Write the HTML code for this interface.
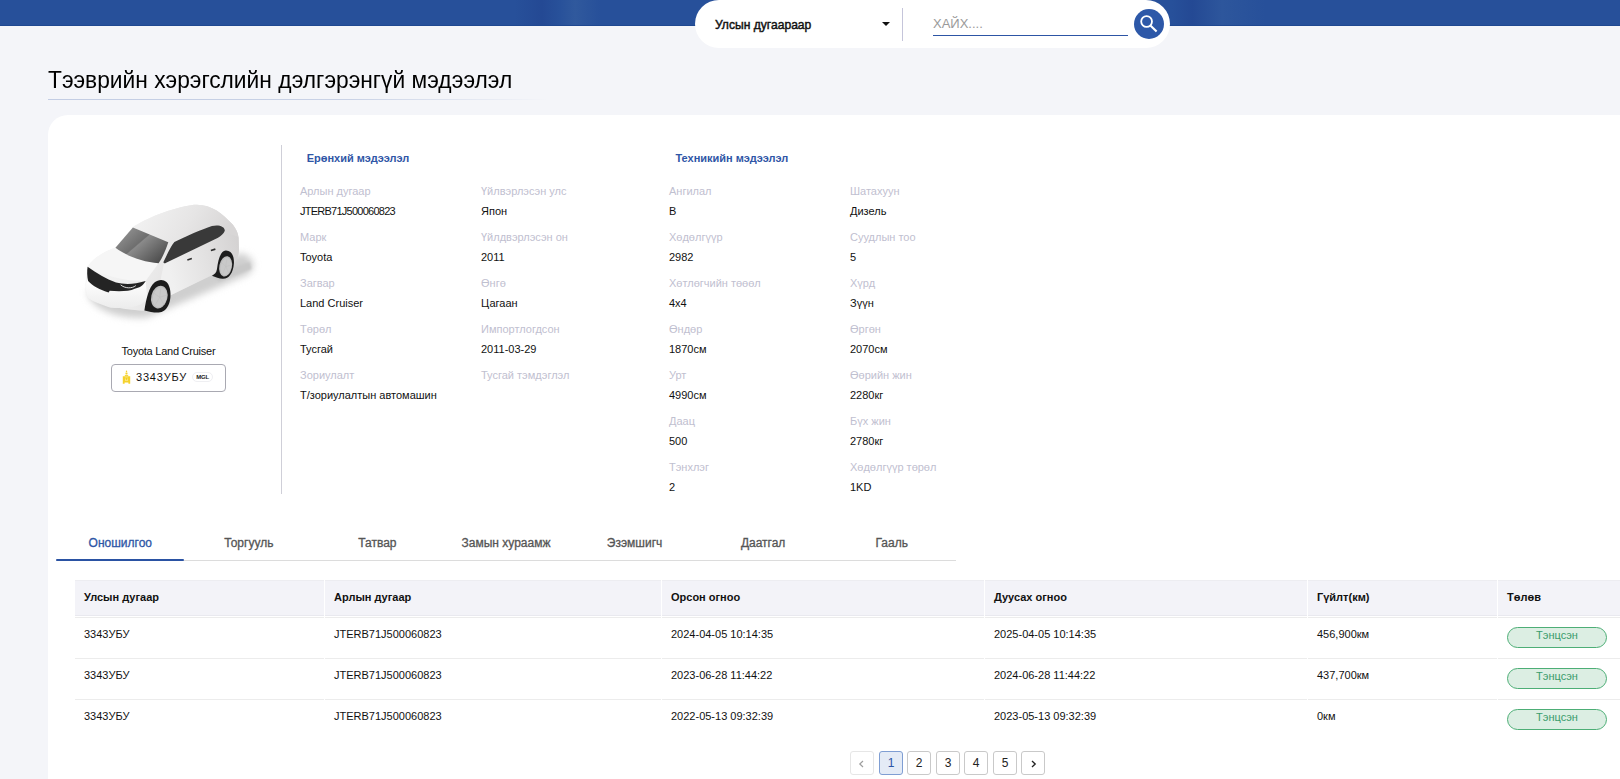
<!DOCTYPE html>
<html><head><meta charset="utf-8">
<style>
*{box-sizing:border-box;margin:0;padding:0}
html,body{width:1620px;height:779px;overflow:hidden;background:#F4F5F9;font-family:"Liberation Sans",sans-serif;color:#111}
.abs{position:absolute;white-space:nowrap}
#hdr{position:absolute;left:0;top:0;width:1620px;height:26px;background:linear-gradient(90deg,#27509A 0px,#27509A 515px,#244994 542px,#28519A 560px,#30599D 575px,#27509A 600px,#27509A 1172px,#244994 1192px,#2D569C 1222px,#27509A 1265px,#27509A 1620px);border-bottom:1px solid #1F4891}
#pill{position:absolute;left:695px;top:0;width:475px;height:48px;background:#fff;border-radius:24px}
#title{position:absolute;left:48px;top:66px;font-size:24px;line-height:28px;color:#000;transform:scaleX(0.948);transform-origin:0 0}
#tline{position:absolute;left:48px;top:99px;width:500px;height:1px;background:linear-gradient(90deg,#C3CDE4 0%,#C9D2E6 60%,rgba(244,245,249,0) 100%)}
#card{position:absolute;left:48px;top:115px;width:1600px;height:700px;background:#fff;border-radius:20px 0 0 0}
.sec{font-size:11px;line-height:13px;font-weight:700;color:#2F56A6}
.lbl{font-size:11px;line-height:13px;color:#BFC0D0}
.val{font-size:11px;line-height:13px;color:#111}
.tab{position:absolute;top:535.8px;line-height:14px;width:128.57px;text-align:center;font-size:12px;color:#555;-webkit-text-stroke:0.3px currentColor}
.th{position:absolute;top:580px;height:36px;background:#F3F3F8;border-bottom:1px solid #E9E9EF;border-top:1px solid #EDEDF1}
.th span{position:absolute;left:9px;top:10px;line-height:13px;font-size:11px;font-weight:700;color:#111}
.td{position:absolute;font-size:11px;color:#111}
.rl{position:absolute;height:1px;background:#ECECEC}
.pg{position:absolute;top:751px;width:24px;height:24px;border:1px solid #C9C9C9;border-radius:3px;background:#fff;font-size:12px;text-align:center;line-height:22px;color:#222}
.badge{position:absolute;left:1507px;width:100px;height:20.5px;border:1px solid #4DAE76;background:#DCEEE3;border-radius:10.5px;color:#3A9C6C;font-size:11px;text-align:center;line-height:15px}
</style></head>
<body>
<div id="hdr"></div>
<div id="pill"></div>
<div class="abs" style="left:715px;top:18.4px;font-size:12.1px;line-height:14px;font-weight:400;color:#111;-webkit-text-stroke:0.45px #111">Улсын дугаараар</div>
<svg class="abs" style="left:881px;top:21px" width="10" height="6" viewBox="0 0 10 6"><path d="M1 1 L9 1 L5 5 Z" fill="#111"/></svg>
<div class="abs" style="left:902px;top:8px;width:1px;height:33px;background:#C5C5DA"></div>
<div class="abs" style="left:933px;top:16px;font-size:13px;color:#9A9A9A">ХАЙХ....</div>
<div class="abs" style="left:933px;top:35px;width:195px;height:1px;background:#2D55A5"></div>
<div class="abs" style="left:1134px;top:9px;width:30px;height:30px;border-radius:15px;background:#2D58A8"></div>
<svg class="abs" style="left:1134px;top:9px" width="30" height="30" viewBox="0 0 30 30"><circle cx="12.6" cy="12.5" r="5.4" fill="none" stroke="#fff" stroke-width="1.8"/><path d="M16.4 16.4 L22.6 22.6" stroke="#fff" stroke-width="2.1" stroke-linecap="butt"/></svg>

<div id="title" class="abs">Тээврийн хэрэгслийн дэлгэрэнгүй мэдээлэл</div>
<div id="tline"></div>

<div id="card"></div>
<svg class="abs" style="left:70px;top:190px" width="200" height="140" viewBox="0 0 1113 779">
<defs>
<linearGradient id="cb" x1="0" y1="0" x2="1" y2="0.3"><stop offset="0" stop-color="#FAFAFA"/><stop offset="0.45" stop-color="#EFEFEF"/><stop offset="1" stop-color="#D9D7D7"/></linearGradient>
<linearGradient id="cr" x1="0" y1="0" x2="1" y2="0.2"><stop offset="0" stop-color="#F4F4F4"/><stop offset="0.6" stop-color="#E6E5E5"/><stop offset="1" stop-color="#D8D6D6"/></linearGradient>
<linearGradient id="cs" x1="0" y1="0" x2="1" y2="-0.2"><stop offset="0" stop-color="#F0F0F0"/><stop offset="0.5" stop-color="#E2E1E1"/><stop offset="1" stop-color="#D2D0D0"/></linearGradient>
<linearGradient id="cw" x1="0" y1="0" x2="1" y2="0.8"><stop offset="0" stop-color="#9E9E9E"/><stop offset="0.48" stop-color="#6E6E6E"/><stop offset="0.5" stop-color="#8A8A8A"/><stop offset="1" stop-color="#4A4A4A"/></linearGradient>
<linearGradient id="cf" x1="0" y1="0" x2="0" y2="1"><stop offset="0" stop-color="#FFFFFF"/><stop offset="1" stop-color="#ECECEC"/></linearGradient>
<filter id="cbl" x="-30%" y="-30%" width="160%" height="160%"><feGaussianBlur stdDeviation="20"/></filter>
<filter id="cbl2" x="-30%" y="-30%" width="160%" height="160%"><feGaussianBlur stdDeviation="6"/></filter>
</defs>
<path d="M95 560 C 110 660 260 720 430 710 L 990 470 C 1040 430 1030 370 950 350 L 520 560 Z" fill="#CFCFCF" filter="url(#cbl)"/>
<path d="M780 470 L 1000 400 L 1010 440 L 830 510 Z" fill="#C8C8C8" filter="url(#cbl2)"/>
<path d="M350 207 C 420 160 560 100 690 82 C 780 75 850 130 900 187 C 925 215 935 240 938 270 L 940 330 C 940 370 925 400 900 420 L 560 585 C 530 640 470 680 415 672 C 330 668 180 650 101 598 C 88 580 84 560 84 535 L 98 427 C 120 390 170 350 253 322 Z" fill="url(#cb)"/>
<path d="M350 207 C 420 160 560 100 690 82 C 780 75 850 130 900 187 C 925 215 935 240 938 262 L 860 232 C 850 200 820 195 800 200 L 547 291 Z" fill="url(#cr)"/>
<path d="M523 407 L 860 232 L 938 262 L 940 330 C 940 370 925 400 900 420 L 560 585 C 540 600 520 560 500 520 Z" fill="url(#cs)"/>
<path d="M98 427 C 120 390 170 350 253 322 C 300 350 400 395 493 408 C 470 440 440 480 421 507 C 300 510 170 470 98 427 Z" fill="#F6F6F6"/>
<path d="M84 535 L 98 500 C 200 545 320 568 421 509 L 430 600 C 400 660 300 660 227 655 C 180 640 120 620 101 598 Z" fill="url(#cf)"/>
<path d="M350 208 L 547 291 C 535 330 515 375 493 408 C 400 400 310 365 253 322 Z" fill="url(#cw)"/>
<path d="M581 290 C 650 255 730 220 790 200 C 830 190 865 205 861 228 C 855 245 840 255 821 267 L 535 405 C 522 412 518 405 522 396 C 540 360 560 315 581 290 Z" fill="#393939"/>
<path d="M98 427 C 150 465 200 495 256 515 C 300 525 350 528 421 507 C 405 535 385 545 360 550 C 330 565 270 566 221 561 L 215 570 C 170 560 120 530 101 507 C 95 480 94 450 98 427 Z" fill="#242424"/>
<path d="M282 528 C 305 548 345 550 366 532" stroke="#F0F0F0" stroke-width="5" fill="none"/>
<path d="M414 670 C 425 600 440 540 470 515 C 500 490 545 495 556 550 C 570 620 540 685 490 682 C 460 682 440 676 414 670 Z" fill="#1C1C1C"/>
<ellipse cx="497" cy="596" rx="45" ry="64" transform="rotate(14 497 596)" fill="#BDBDBD"/>
<ellipse cx="499" cy="597" rx="38" ry="56" transform="rotate(14 499 597)" fill="#C9C9C9"/>
<path d="M499 597 L 505 548 M499 597 L 540 585 M499 597 L 525 640 M499 597 L 475 638 M499 597 L 462 570" stroke="#C0C0C0" stroke-width="4"/>
<path d="M790 477 C 805 470 815 460 818 440 C 825 380 840 340 866 337 C 900 335 915 370 912 410 C 908 460 885 495 850 494 C 830 492 810 485 790 477 Z" fill="#1C1C1C"/>
<ellipse cx="866" cy="425" rx="35" ry="57" transform="rotate(12 866 425)" fill="#BDBDBD"/>
<ellipse cx="867" cy="426" rx="29" ry="49" transform="rotate(12 867 426)" fill="#C9C9C9"/>
<path d="M867 426 L 873 384 M867 426 L 898 418 M867 426 L 885 465 M867 426 L 850 465 M867 426 L 840 400" stroke="#C0C0C0" stroke-width="3"/>
<path d="M653 389 L 678 381 M 784 337 L 809 329" stroke="#2E2E2E" stroke-width="9"/>
</svg>


<div class="abs" style="left:281px;top:145px;width:1px;height:349px;background:#CFCFD8"></div>
<div class="abs sec" style="left:306.7px;top:152px">Ерөнхий мэдээлэл</div>
<div class="abs sec" style="left:675.4px;top:152px">Техникийн мэдээлэл</div>
<div class="abs lbl" style="left:300px;top:184.8px">Арлын дугаар</div>
<div class="abs val" style="left:300px;top:204.9px;letter-spacing:-0.75px">JTERB71J500060823</div>
<div class="abs lbl" style="left:300px;top:230.8px">Марк</div>
<div class="abs val" style="left:300px;top:250.9px">Toyota</div>
<div class="abs lbl" style="left:300px;top:276.8px">Загвар</div>
<div class="abs val" style="left:300px;top:296.9px">Land Cruiser</div>
<div class="abs lbl" style="left:300px;top:322.8px">Төрөл</div>
<div class="abs val" style="left:300px;top:342.9px">Тусгай</div>
<div class="abs lbl" style="left:300px;top:368.8px">Зориулалт</div>
<div class="abs val" style="left:300px;top:388.9px">Т/зориулалтын автомашин</div>
<div class="abs lbl" style="left:481px;top:184.8px">Үйлвэрлэсэн улс</div>
<div class="abs val" style="left:481px;top:204.9px">Япон</div>
<div class="abs lbl" style="left:481px;top:230.8px">Үйлдвэрлэсэн он</div>
<div class="abs val" style="left:481px;top:250.9px">2011</div>
<div class="abs lbl" style="left:481px;top:276.8px">Өнгө</div>
<div class="abs val" style="left:481px;top:296.9px">Цагаан</div>
<div class="abs lbl" style="left:481px;top:322.8px">Импортлогдсон</div>
<div class="abs val" style="left:481px;top:342.9px">2011-03-29</div>
<div class="abs lbl" style="left:481px;top:368.8px">Тусгай тэмдэглэл</div>
<div class="abs lbl" style="left:669px;top:184.8px">Ангилал</div>
<div class="abs val" style="left:669px;top:204.9px">B</div>
<div class="abs lbl" style="left:669px;top:230.8px">Хөдөлгүүр</div>
<div class="abs val" style="left:669px;top:250.9px">2982</div>
<div class="abs lbl" style="left:669px;top:276.8px">Хөтлөгчийн төөөл</div>
<div class="abs val" style="left:669px;top:296.9px">4x4</div>
<div class="abs lbl" style="left:669px;top:322.8px">Өндөр</div>
<div class="abs val" style="left:669px;top:342.9px">1870см</div>
<div class="abs lbl" style="left:669px;top:368.8px">Урт</div>
<div class="abs val" style="left:669px;top:388.9px">4990см</div>
<div class="abs lbl" style="left:669px;top:414.8px">Даац</div>
<div class="abs val" style="left:669px;top:434.9px">500</div>
<div class="abs lbl" style="left:669px;top:460.8px">Тэнхлэг</div>
<div class="abs val" style="left:669px;top:480.9px">2</div>
<div class="abs lbl" style="left:850px;top:184.8px">Шатахуун</div>
<div class="abs val" style="left:850px;top:204.9px">Дизель</div>
<div class="abs lbl" style="left:850px;top:230.8px">Суудлын тоо</div>
<div class="abs val" style="left:850px;top:250.9px">5</div>
<div class="abs lbl" style="left:850px;top:276.8px">Хүрд</div>
<div class="abs val" style="left:850px;top:296.9px">Зүүн</div>
<div class="abs lbl" style="left:850px;top:322.8px">Өргөн</div>
<div class="abs val" style="left:850px;top:342.9px">2070см</div>
<div class="abs lbl" style="left:850px;top:368.8px">Өөрийн жин</div>
<div class="abs val" style="left:850px;top:388.9px">2280кг</div>
<div class="abs lbl" style="left:850px;top:414.8px">Бүх жин</div>
<div class="abs val" style="left:850px;top:434.9px">2780кг</div>
<div class="abs lbl" style="left:850px;top:460.8px">Хөдөлгүүр төрөл</div>
<div class="abs val" style="left:850px;top:480.9px">1KD</div>
<div class="abs val" style="left:121.5px;top:345px;letter-spacing:-0.24px">Toyota Land Cruiser</div>
<div class="abs" style="left:111px;top:364px;width:115px;height:28px;border:1px solid #A9A9B2;border-radius:4px;background:#fff"></div>
<div class="abs" style="left:136px;top:370.5px;font-size:11px;font-weight:400;letter-spacing:0.8px;color:#111;line-height:13px">3343УБУ</div>
<div class="abs" style="left:192px;top:371.5px;width:21px;height:10px;border-radius:6px;background:#fff;border:1px solid #EFEFF2;font-size:6px;font-weight:700;line-height:8px;text-align:center;color:#222;letter-spacing:-0.2px">MGL</div>
<svg class="abs" style="left:122px;top:370px" width="9" height="14" viewBox="0 0 9 14"><path d="M4.5 0 L5.4 2.2 L3.6 2.2 Z" fill="#F5D22C"/><circle cx="4.5" cy="3.5" r="1.1" fill="#F5D22C"/><rect x="2.8" y="4.9" width="3.4" height="1" fill="#F5D22C"/><path d="M0.8 6.2 H8.2 V13.7 H6.4 V12.6 H2.6 V13.7 H0.8 Z" fill="#F5D22C"/><path d="M3 7.5 H6 V11 H3 Z" fill="#FBE37A"/><path d="M3.3 8.2 L5.7 8.2 L4.5 10 Z" fill="#F0C800"/></svg>
<div class="tab" style="left:56.00px;color:#2D55A5">Оношилгоо</div>
<div class="tab" style="left:184.57px;">Торгууль</div>
<div class="tab" style="left:313.14px;">Татвар</div>
<div class="tab" style="left:441.71px;">Замын хураамж</div>
<div class="tab" style="left:570.28px;">Эзэмшигч</div>
<div class="tab" style="left:698.85px;">Даатгал</div>
<div class="tab" style="left:827.42px;">Гааль</div>
<div class="abs" style="left:56px;top:560px;width:900px;height:1px;background:#DCDCDC"></div>
<div class="abs" style="left:56px;top:559px;width:128px;height:1.5px;background:#2A52A3;border-radius:1px"></div>
<div class="th" style="left:75px;width:249px"><span>Улсын дугаар</span></div>
<div class="rl" style="left:75px;top:617px;width:249px"></div>
<div class="rl" style="left:75px;top:658px;width:249px"></div>
<div class="rl" style="left:75px;top:699px;width:249px"></div>
<div class="th" style="left:325px;width:336px"><span>Арлын дугаар</span></div>
<div class="rl" style="left:325px;top:617px;width:336px"></div>
<div class="rl" style="left:325px;top:658px;width:336px"></div>
<div class="rl" style="left:325px;top:699px;width:336px"></div>
<div class="th" style="left:662px;width:322px"><span>Орсон огноо</span></div>
<div class="rl" style="left:662px;top:617px;width:322px"></div>
<div class="rl" style="left:662px;top:658px;width:322px"></div>
<div class="rl" style="left:662px;top:699px;width:322px"></div>
<div class="th" style="left:985px;width:322px"><span>Дуусах огноо</span></div>
<div class="rl" style="left:985px;top:617px;width:322px"></div>
<div class="rl" style="left:985px;top:658px;width:322px"></div>
<div class="rl" style="left:985px;top:699px;width:322px"></div>
<div class="th" style="left:1308px;width:189px"><span>Гүйлт(км)</span></div>
<div class="rl" style="left:1308px;top:617px;width:189px"></div>
<div class="rl" style="left:1308px;top:658px;width:189px"></div>
<div class="rl" style="left:1308px;top:699px;width:189px"></div>
<div class="th" style="left:1498px;width:200px"><span>Төлөв</span></div>
<div class="rl" style="left:1498px;top:617px;width:200px"></div>
<div class="rl" style="left:1498px;top:658px;width:200px"></div>
<div class="rl" style="left:1498px;top:699px;width:200px"></div>
<div class="abs td" style="left:84px;top:628px;line-height:13px">3343УБУ</div>
<div class="abs td" style="left:334px;top:628px;line-height:13px">JTERB71J500060823</div>
<div class="abs td" style="left:671px;top:628px;line-height:13px">2024-04-05 10:14:35</div>
<div class="abs td" style="left:994px;top:628px;line-height:13px">2025-04-05 10:14:35</div>
<div class="abs td" style="left:1317px;top:628px;line-height:13px">456,900км</div>
<div class="badge" style="top:627px">Тэнцсэн</div>
<div class="abs td" style="left:84px;top:669px;line-height:13px">3343УБУ</div>
<div class="abs td" style="left:334px;top:669px;line-height:13px">JTERB71J500060823</div>
<div class="abs td" style="left:671px;top:669px;line-height:13px">2023-06-28 11:44:22</div>
<div class="abs td" style="left:994px;top:669px;line-height:13px">2024-06-28 11:44:22</div>
<div class="abs td" style="left:1317px;top:669px;line-height:13px">437,700км</div>
<div class="badge" style="top:668px">Тэнцсэн</div>
<div class="abs td" style="left:84px;top:710px;line-height:13px">3343УБУ</div>
<div class="abs td" style="left:334px;top:710px;line-height:13px">JTERB71J500060823</div>
<div class="abs td" style="left:671px;top:710px;line-height:13px">2022-05-13 09:32:39</div>
<div class="abs td" style="left:994px;top:710px;line-height:13px">2023-05-13 09:32:39</div>
<div class="abs td" style="left:1317px;top:710px;line-height:13px">0км</div>
<div class="badge" style="top:709px">Тэнцсэн</div>
<div class="pg" style="left:850px;border-color:#E6E6E6;color:#AAA;"><svg width="22" height="22" viewBox="0 0 22 22" style="display:block"><path d="M12 9 L8.8 12 L12 15" fill="none" stroke="#9E9E9E" stroke-width="1.2"/></svg></div>
<div class="pg" style="left:879px;border-color:#7F9ED3;background:#E4EBF6;color:#2D55A5;">1</div>
<div class="pg" style="left:907px;">2</div>
<div class="pg" style="left:936px;">3</div>
<div class="pg" style="left:964px;">4</div>
<div class="pg" style="left:993px;">5</div>
<div class="pg" style="left:1021px;"><svg width="22" height="22" viewBox="0 0 22 22" style="display:block"><path d="M10 9 L13.2 12 L10 15" fill="none" stroke="#222" stroke-width="1.35"/></svg></div>
</body></html>
